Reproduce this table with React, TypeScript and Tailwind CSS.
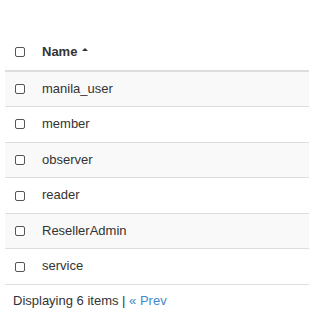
const ROWS = ["manila_user", "member", "observer", "reader", "ResellerAdmin", "service"];

function Box() {
  return (
    <span className="block w-[10px] h-[10px] rounded-[2px] border border-[#555] bg-white" />
  );
}

export default function App() {
  return (
    <div
      className="w-[334px] h-[322px] bg-white text-[13px] leading-[1.42857] text-[#333]"
      style={{ fontFamily: '"Liberation Sans", Arial, sans-serif' }}
    >
      <div className="pt-[35px] px-[5px] w-[314px]">
        {/* Header */}
        <div className="flex items-center h-[36.57px] border-b-2 border-[#ddd]">
          <div className="w-[37px] pl-[10px]">
            <Box />
          </div>
          <div className="flex items-center font-bold">
            Name
            <span className="ml-[5px] mb-[6px] w-0 h-0 border-l-[3px] border-r-[3px] border-b-[3px] border-l-transparent border-r-transparent border-b-[#333]" />
          </div>
        </div>

        {/* Rows */}
        {ROWS.map((name, i) => (
          <div
            key={name}
            className={`flex items-center h-[35.57px] border-b border-[#ddd] ${i % 2 === 0 ? "bg-[#f9f9f9]" : "bg-white"}`}
          >
            <div className="w-[37px] pl-[10px]">
              <Box />
            </div>
            <div>{name}</div>
          </div>
        ))}

        {/* Footer */}
        <div className="px-[8px] pt-[7px]">
          Displaying 6 items | <a className="text-[#428bca]">« Prev</a>
        </div>
      </div>
    </div>
  );
}
